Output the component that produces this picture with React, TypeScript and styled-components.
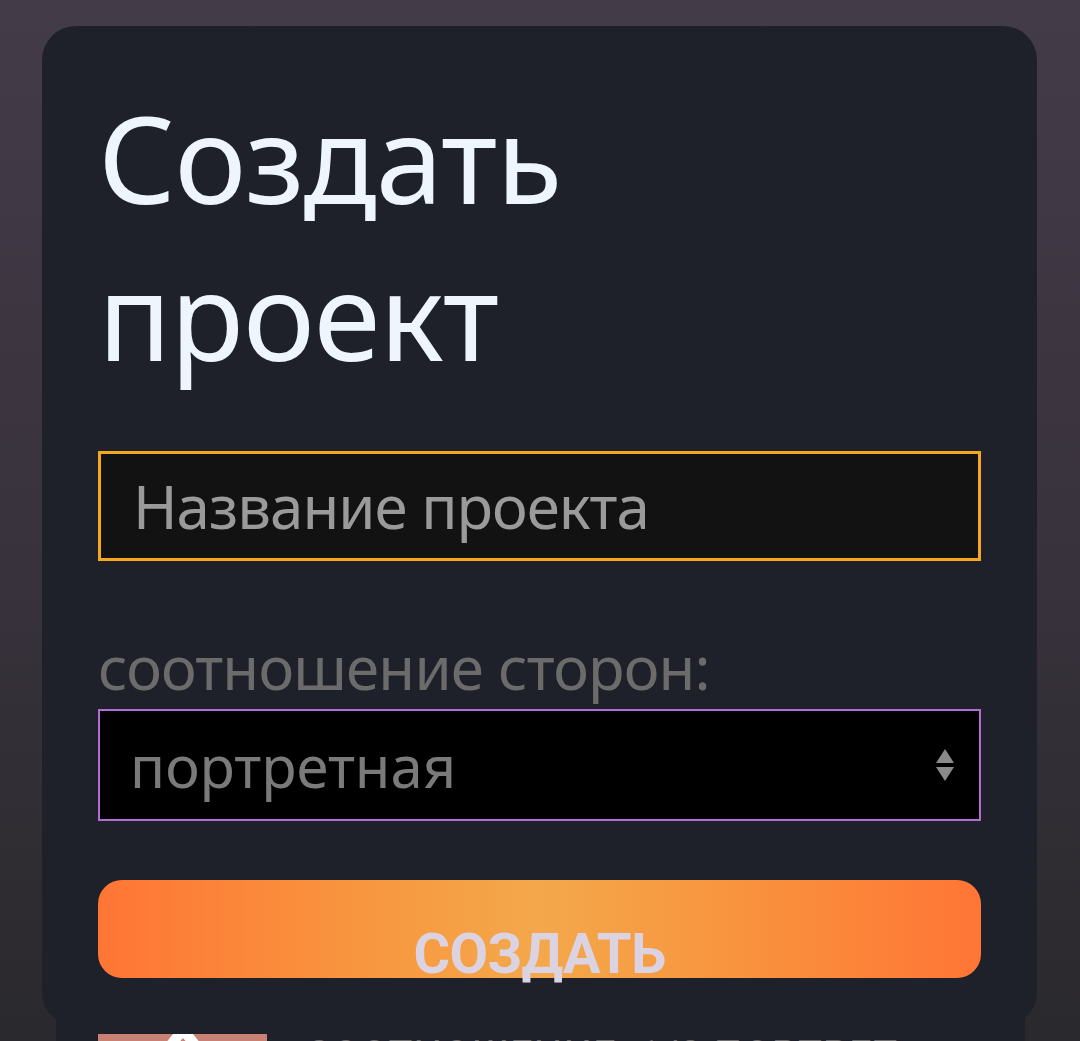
import styled, { createGlobalStyle } from 'styled-components'

const GlobalStyle = createGlobalStyle`
  html, body {
    margin: 0;
    padding: 0;
  }
  body {
    font-family: "Noto Sans", "Open Sans", sans-serif;
    background: #2a292d;
  }
`

const Page = styled.div`
  position: relative;
  width: 1080px;
  height: 1041px;
  overflow: hidden;
  background: linear-gradient(180deg, #443b48 0%, #39333d 50%, #2a292d 100%);
`

// project list that sits behind the dialog
const List = styled.div`
  display: flex;
  flex-direction: column;
  padding: 960px 55px 0 56px;
`

const ProjectCard = styled.div`
  display: flex;
  gap: 38px;
  background: #1e2129;
  padding: 74px 42px 40px;
  height: 300px;
`

const Thumb = styled.div`
  width: 169px;
  height: 220px;
  flex: none;
  background: #c98174;
  display: flex;
  justify-content: center;
`

const CardText = styled.div`
  font-family: "Liberation Sans Narrow", "Roboto", sans-serif;
  font-size: 40px;
  color: #6d6d6d;
  text-transform: uppercase;
  letter-spacing: 1px;
  margin-top: -2px;
`

const Modal = styled.div`
  position: absolute;
  top: 26px;
  left: 42px;
  width: 995px;
  height: 1000px;
  box-sizing: border-box;
  background: #1e2129;
  border-radius: 34px;
  padding: 53px 56px 0;
  display: flex;
  flex-direction: column;
`

const Title = styled.h1`
  margin: 0;
  font-family: "Noto Sans", sans-serif;
  font-weight: 400;
  font-size: 121px;
  line-height: 157px;
  color: #eef5fc;
  letter-spacing: -1px;
`

const TextInput = styled.input`
  margin-top: 58px;
  height: 110px;
  box-sizing: border-box;
  width: 100%;
  background: #121212;
  border: 3px solid #f6a71c;
  padding: 0 32px;
  font-family: "Noto Sans", sans-serif;
  font-size: 60px;
  letter-spacing: -1px;
  color: #9a9a9a;
  outline: none;
  &::placeholder {
    color: #9a9a9a;
  }
`

const Label = styled.div`
  margin-top: 68px;
  font-family: "Noto Sans", sans-serif;
  font-size: 60px;
  line-height: 76px;
  letter-spacing: -0.8px;
  color: #6b6b6b;
`

const SelectBox = styled.div`
  margin-top: 4px;
  height: 112px;
  box-sizing: border-box;
  background: #000;
  border: 2px solid #b66ad4;
  display: flex;
  align-items: center;
  justify-content: space-between;
  padding: 0 24px 0 30px;
  font-family: "Noto Sans", sans-serif;
  font-size: 58px;
  color: #7a7a7a;
`

const CreateButton = styled.button`
  margin-top: 59px;
  height: 98px;
  width: 100%;
  border: none;
  border-radius: 24px;
  background: linear-gradient(90deg, #ff7535 0%, #f8963f 30%, #f4a84b 50%, #f8963f 70%, #ff7535 100%);
  display: flex;
  justify-content: center;
  align-items: flex-start;
  padding: 41px 0 0;
  font-family: "Roboto", "Liberation Sans", sans-serif;
  font-weight: 700;
  font-size: 56px;
  line-height: 66px;
  color: #dbd2e2;
  letter-spacing: -0.6px;
  overflow: visible;
`

function Arrows() {
  return (
    <svg width="20" height="36" viewBox="0 0 20 36">
      <polygon points="10,2 19,16 1,16" fill="#8a8a8a" />
      <polygon points="1,20 19,20 10,34" fill="#8a8a8a" />
    </svg>
  )
}

function ThumbIcon() {
  return (
    <svg width="80" height="20" viewBox="0 0 80 20">
      <path d="M14 20 L30 0 L50 0 L66 20 L54 20 L40 4 L26 20 Z" fill="#ffffff" />
    </svg>
  )
}

export default function App() {
  return (
    <>
      <GlobalStyle />
      <Page>
        <List>
          <ProjectCard>
            <Thumb>
              <ThumbIcon />
            </Thumb>
            <CardText>Соотношение: 1/2 портрет</CardText>
          </ProjectCard>
        </List>
        <Modal>
          <Title>
            Создать
            <br />
            проект
          </Title>
          <TextInput placeholder="Название проекта" />
          <Label>соотношение сторон:</Label>
          <SelectBox>
            портретная
            <Arrows />
          </SelectBox>
          <CreateButton>СОЗДАТЬ</CreateButton>
        </Modal>
      </Page>
    </>
  )
}
